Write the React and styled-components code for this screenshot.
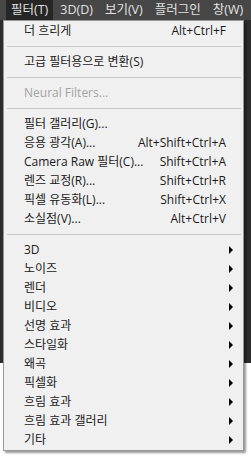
import React from 'react'
import styled, {createGlobalStyle} from 'styled-components'

const GlobalStyle = createGlobalStyle`
  html, body {
    margin: 0;
    padding: 0;
    background: #ffffff;
  }
  body {
    font-family: "Open Sans", "Noto Sans CJK KR", sans-serif;
  }
`

const Page = styled.div`
  position: relative;
  width: 251px;
  height: 462px;
  overflow: hidden;
  background: #ffffff;
`

const MenuBar = styled.div`
  display: flex;
  align-items: stretch;
  gap: 2px;
  height: 20px;
  padding-left: 6px;
  background: #474747;
`

const BarItem = styled.div`
  display: flex;
  align-items: center;
  padding: 0 5px;
  font-size: 12.5px;
  line-height: 20px;
  white-space: nowrap;
  color: #e2e2e2;
  background: ${p => (p.$active ? '#262626' : 'transparent')};
`

const Workspace = styled.div`
  height: 343px;
  background: #2c2c2c;
`

const Dropdown = styled.div`
  position: absolute;
  top: 20px;
  left: 3px;
  width: 239px;
  padding: 0 0 1px;
  background: #f0f0f0;
  border: 1px solid #979797;
  box-shadow: 2px 2px 2px rgba(0, 0, 0, 0.4);
`

const Row = styled.div`
  display: flex;
  align-items: center;
  height: 19px;
  line-height: 19px;
  padding: 0 17px 0 20px;
  font-size: 12px;
  color: ${p => (p.$disabled ? '#a3a3a3' : '#1a1a1a')};
  white-space: nowrap;
`

const Label = styled.span`
  flex: 1;
`

const Shortcut = styled.span`
  text-align: right;
`

const Arrow = styled.span`
  width: 0;
  height: 0;
  margin-right: -7px;
  border-top: 4px solid transparent;
  border-bottom: 4px solid transparent;
  border-left: 4px solid #000;
`

const Separator = styled.div`
  height: 12px;
  display: flex;
  align-items: center;
  padding: 0 2px 0 3px;

  &::after {
    content: '';
    flex: 1;
    height: 1px;
    background: #c9c9c9;
  }
`

const bar = [
  {label: '필터(T)', active: true},
  {label: '3D(D)'},
  {label: '보기(V)'},
  {label: '플러그인'},
  {label: '창(W)'},
]

const items = [
  {label: '더 흐리게', key: 'Alt+Ctrl+F'},
  'sep',
  {label: '고급 필터용으로 변환(S)'},
  'sep',
  {label: 'Neural Filters...', disabled: true},
  'sep',
  {label: '필터 갤러리(G)...'},
  {label: '응용 광각(A)...', key: 'Alt+Shift+Ctrl+A'},
  {label: 'Camera Raw 필터(C)...', key: 'Shift+Ctrl+A'},
  {label: '렌즈 교정(R)...', key: 'Shift+Ctrl+R'},
  {label: '픽셀 유동화(L)...', key: 'Shift+Ctrl+X'},
  {label: '소실점(V)...', key: 'Alt+Ctrl+V'},
  'sep',
  {label: '3D', sub: true},
  {label: '노이즈', sub: true},
  {label: '렌더', sub: true},
  {label: '비디오', sub: true},
  {label: '선명 효과', sub: true},
  {label: '스타일화', sub: true},
  {label: '왜곡', sub: true},
  {label: '픽셀화', sub: true},
  {label: '흐림 효과', sub: true},
  {label: '흐림 효과 갤러리', sub: true},
  {label: '기타', sub: true},
]

export default function App() {
  return (
    <Page>
      <GlobalStyle/>
      <MenuBar>
        {bar.map(b => (
          <BarItem key={b.label} $active={b.active}>{b.label}</BarItem>
        ))}
      </MenuBar>
      <Workspace/>
      <Dropdown>
        {items.map((it, i) =>
          it === 'sep' ? (
            <Separator key={i}/>
          ) : (
            <Row key={i} $disabled={it.disabled}>
              <Label>{it.label}</Label>
              {it.key && <Shortcut>{it.key}</Shortcut>}
              {it.sub && <Arrow/>}
            </Row>
          )
        )}
      </Dropdown>
    </Page>
  )
}
